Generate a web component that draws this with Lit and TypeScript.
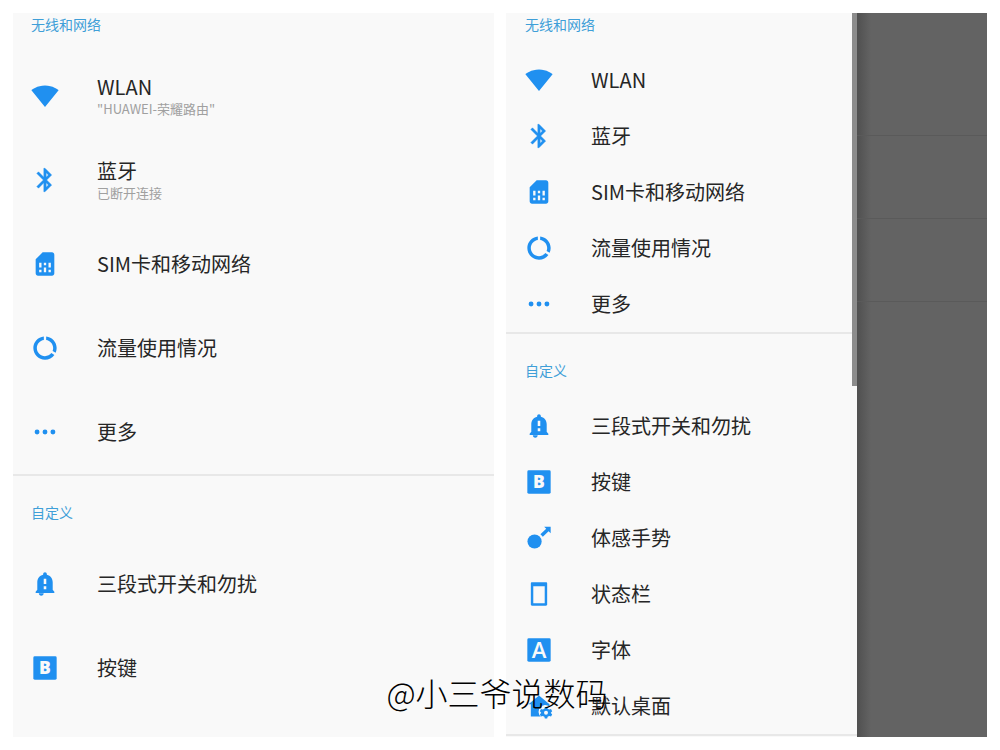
import { LitElement, html, svg, css, nothing } from "lit";
import { customElement, property } from "lit/decorators.js";

interface Item {
  icon: string;
  title: string;
  note?: string;
}

interface Section {
  heading: string;
  items: Item[];
}

const ICONS: Record<string, unknown> = {
  wifi: svg`<path d="M12.01 21.49 23.64 7c-.45-.34-4.93-4-11.64-4C5.28 3 .81 6.66.36 7l11.63 14.49.01.01z"/>`,
  bluetooth: svg`<path stroke="#2090f0" stroke-width=".4" d="M17.71 7.71 12 2h-1v7.59L6.41 5 5 6.41 10.59 12 5 17.59 6.41 19 11 14.41V22h1l5.71-5.71-4.3-4.29 4.3-4.29zM13 5.83l1.88 1.88L13 9.59V5.83zm1.88 10.46L13 18.17v-3.76l1.88 1.88z"/>`,
  sim: svg`<path d="M19.99 4c0-1.1-.89-2-1.99-2h-8L4 8v12c0 1.1.9 2 2 2h12.01c1.1 0 1.99-.9 1.99-2l-.01-16zM9 19H7v-2h2v2zm8 0h-2v-2h2v2zm-8-4H7v-4h2v4zm4 4h-2v-4h2v4zm0-6h-2v-2h2v2zm4 2h-2v-4h2v4z"/>`,
  data: svg`<path d="M13 2.05v3.03c3.39.49 6 3.39 6 6.92 0 .9-.18 1.75-.48 2.54l2.6 1.53c.56-1.24.88-2.62.88-4.07 0-5.18-3.95-9.45-9-9.95zM12 19c-3.87 0-7-3.13-7-7 0-3.53 2.61-6.43 6-6.92V2.05c-5.06.5-9 4.76-9 9.95 0 5.52 4.47 10 9.99 10 3.31 0 6.24-1.61 8.06-4.09l-2.6-1.53C16.17 17.98 14.21 19 12 19z"/>`,
  more: svg`<circle cx="5.2" cy="12" r="2.1"/><circle cx="12" cy="12" r="2.1"/><circle cx="18.8" cy="12" r="2.1"/>`,
  bell: svg`<path d="M12 2c-.9 0-1.6.7-1.6 1.6v.4C7.2 4.8 5.4 7.4 5.4 10.500V17L4 18.600V19.800H20V18.600L18.600 17V10.500C18.600 7.400 16.800 4.800 13.600 4V3.600C13.600 2.700 12.900 2 12 2z"/><path d="M6.700 20h4.200c0 1.300-.9 2.100-2.100 2.100s-2.100-.8-2.100-2.100z"/><path class="cut" d="M10.900 7.600h2.200v4.400h-2.200zM10.900 14h2.200v2.400h-2.200z"/>`,
  key: svg`<rect x="2" y="2" width="20" height="20" rx="1.2"/><text class="cut bold" x="12" y="17.300" font-size="15" text-anchor="middle">B</text>`,
  gesture: svg`<circle cx="8.2" cy="15" r="6.1"/><path d="M13.200 8.800 18.200 4.100 16.400 2.300H22V8L20.200 6.200 15.300 11z"/>`,
  status: svg`<path fill-rule="evenodd" d="M6 2h12c.6 0 1 .4 1 1v18c0 .6-.4 1-1 1H6c-.6 0-1-.4-1-1V3c0-.6.4-1 1-1zm1.100 3.400v14.600h9.800V5.400z"/>`,
  font: svg`<rect x="2" y="2" width="20" height="20" rx="1.2"/><text class="cut" x="12" y="18.600" font-size="19" text-anchor="middle">A</text>`,
  home: svg`<path d="M12 3 3 10.5h2V21h8.500a5.500 5.500 0 0 1 7.500-8.500V10.500z"/><g transform="translate(18 17.8)"><path d="M-1-5h2l.4 1.600 1.300.7 1.600-.5 1 1.800L4.100 0l1.200 1.400-1 1.800-1.600-.5-1.300.7L1 5h-2l-.4-1.600-1.300-.7-1.600.5-1-1.800L-4.100 0l-1.200-1.400 1-1.800 1.600.5 1.300-.7z"/><circle class="cut" r="1.7"/></g>`,
};

const wireless = (notes: boolean): Section => ({
  heading: "无线和网络",
  items: [
    { icon: "wifi", title: "WLAN", note: notes ? '"HUAWEI-荣耀路由"' : undefined },
    { icon: "bluetooth", title: "蓝牙", note: notes ? "已断开连接" : undefined },
    { icon: "sim", title: "SIM卡和移动网络" },
    { icon: "data", title: "流量使用情况" },
    { icon: "more", title: "更多" },
  ],
});

const custom: Item[] = [
  { icon: "bell", title: "三段式开关和勿扰" },
  { icon: "key", title: "按键" },
  { icon: "gesture", title: "体感手势" },
  { icon: "status", title: "状态栏" },
  { icon: "font", title: "字体" },
  { icon: "home", title: "默认桌面" },
];

@customElement("settings-list")
export class SettingsList extends LitElement {
  @property({ attribute: false }) sections: Section[] = [];
  @property({ type: Boolean, reflect: true }) compact = false;

  static styles = css`
    :host {
      display: block;
      --row: 84px;
      --heading-gap: 19px;
      --side: 18px;
    }
    :host([compact]) {
      --row: 56px;
      --heading-gap: 17px;
      --side: 19px;
    }
    section {
      border-bottom: 2px solid #e8e8e8;
    }
    section.open {
      border-bottom: 0;
    }
    h2 {
      margin: 0;
      padding: 25px var(--side) var(--heading-gap);
      font-size: 14px;
      line-height: 22px;
      font-weight: 400;
      color: #3f9fd8;
    }
    section:first-child h2 {
      padding-top: 0;
    }
    ul {
      margin: 0;
      padding: 0;
      list-style: none;
    }
    a {
      display: flex;
      align-items: center;
      gap: 38px;
      height: var(--row);
      padding: 0 var(--side);
      color: #262626;
      text-decoration: none;
    }
    svg {
      flex: none;
      width: 28px;
      height: 28px;
      fill: #2090f0;
    }
    .cut {
      fill: #f9f9f9;
    }
    text {
      font-family: "Open Sans", sans-serif;
      font-weight: 600;
    }
    .bold {
      font-weight: 800;
    }
    .words {
      display: flex;
      flex-direction: column;
    }
    .title {
      font-size: 20px;
      line-height: 26px;
    }
    .note {
      font-size: 13px;
      line-height: 18px;
      color: #a0a0a0;
    }
  `;

  render() {
    return this.sections.map(
      (s, i) => html`
        <section class=${!this.compact && i === this.sections.length - 1 ? "open" : ""}>
          <h2>${s.heading}</h2>
          <ul>
            ${s.items.map(
              (item) => html`<li>
                <a href="#${item.icon}">
                  <svg viewBox="0 0 24 24" aria-hidden="true">${ICONS[item.icon]}</svg>
                  <span class="words">
                    <span class="title">${item.title}</span>
                    ${item.note ? html`<span class="note">${item.note}</span>` : nothing}
                  </span>
                </a>
              </li>`
            )}
          </ul>
        </section>
      `
    );
  }
}

@customElement("app-root")
export class AppRoot extends LitElement {
  static styles = css`
    :host {
      display: block;
      background: #fff;
      font-family: "Noto Sans CJK SC", sans-serif;
    }
    .page {
      position: relative;
      box-sizing: border-box;
      height: 100vh;
      padding: 13px;
      display: grid;
      grid-template-columns: 1fr 1fr;
      grid-template-rows: minmax(0, 1fr);
      gap: 12px;
    }
    .screen {
      overflow: hidden;
      background: #f9f9f9;
    }
    .split {
      display: grid;
      grid-template-columns: 73fr 27fr;
      grid-template-rows: minmax(0, 1fr);
    }
    .drawer {
      position: relative;
      overflow: hidden;
    }
    .thumb {
      position: absolute;
      top: 0;
      right: 0;
      width: 5px;
      height: 51.5%;
      background: #8c8c8c;
    }
    .dim {
      background: linear-gradient(90deg, #505050, #636363 14px);
    }
    .line {
      height: 82px;
      border-bottom: 1px solid #5a5a5a;
    }
    .line:first-child {
      height: 122px;
    }
    .mark {
      position: absolute;
      left: 0;
      right: 0;
      bottom: 34px;
      margin: 0;
      padding-right: 6px;
      text-align: center;
      font-size: 32px;
      line-height: 48px;
      font-weight: 300;
      color: #000;
      pointer-events: none;
    }
  `;

  render() {
    return html`
      <main class="page">
        <div class="screen">
          <settings-list
            .sections=${[wireless(true), { heading: "自定义", items: custom.slice(0, 2) }]}
          ></settings-list>
        </div>
        <div class="screen split">
          <div class="drawer">
            <settings-list
              compact
              .sections=${[wireless(false), { heading: "自定义", items: custom }]}
            ></settings-list>
            <div class="thumb"></div>
          </div>
          <div class="dim">
            <div class="line"></div>
            <div class="line"></div>
            <div class="line"></div>
          </div>
        </div>
        <p class="mark">@小三爷说数码</p>
      </main>
    `;
  }
}
